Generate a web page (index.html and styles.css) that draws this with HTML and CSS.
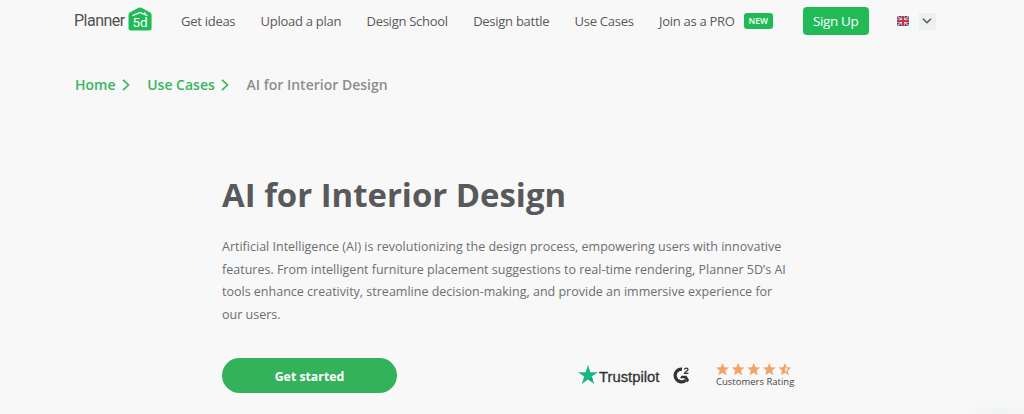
FILE: index.html
```
<!DOCTYPE html>
<html lang="en">
<head>
    <meta charset="UTF-8">
    <title>AI for Interior Design</title>
    <link rel="stylesheet" href="styles.css">
</head>
<body>
    <header class="header">
        <a class="logo" href="#">
            <span class="logo-name">Planner</span>
            <span class="logo-house">
                <svg width="24" height="24" viewBox="0 0 24 24">
                    <path d="M2.200 5.200 10.600.8q1.400-.7 2.800 0l8.400 4.400Q23.600 6.200 23.600 8v13q0 2.500-2.500 2.500H3Q.5 23.500.5 21V8q0-1.800 1.700-2.800z" fill="#20bb57"/>
                    <path d="M4.500 8.700 12 5.400l7.500 3.300M16.800 5.200v2" fill="none" stroke="#fff" stroke-width="1.400"/>
                </svg>
                <span class="logo-mark">5d</span>
            </span>
        </a>
        <nav class="nav">
            <a href="#">Get ideas</a>
            <a href="#">Upload a plan</a>
            <a href="#">Design School</a>
            <a href="#">Design battle</a>
            <a href="#">Use Cases</a>
            <a href="#">Join as a PRO</a>
        </nav>
        <span class="badge">NEW</span>
        <a class="sign-up" href="#">Sign Up</a>
        <svg class="flag" width="12" height="10" viewBox="0 0 12 10">
            <path d="M0 0h12v10H0z" fill="#34406f"/>
            <path d="M0 0l12 10M12 0L0 10" stroke="#f4dfe2" stroke-width="1.600"/>
            <path d="M0 0l12 10M12 0L0 10" stroke="#c5444f" stroke-width=".7"/>
            <path d="M6 0v10M0 5h12" stroke="#fff" stroke-width="3"/>
            <path d="M6 0v10M0 5h12" stroke="#d32f3f" stroke-width="2"/>
        </svg>
        <span class="lang">
            <svg width="10" height="6" viewBox="0 0 10 6"><path d="M1 .8l4 4 4-4" fill="none" stroke="#555" stroke-width="1.500"/></svg>
        </span>
    </header>

    <div class="breadcrumbs">
        <a href="#">Home</a>
        <svg width="8" height="12" viewBox="0 0 8 12"><path d="M1 .8L6.500 6 1 11.200" fill="none" stroke="#37b55f" stroke-width="1.700"/></svg>
        <a href="#">Use Cases</a>
        <svg width="8" height="12" viewBox="0 0 8 12"><path d="M1 .8L6.500 6 1 11.200" fill="none" stroke="#37b55f" stroke-width="1.700"/></svg>
        <span>AI for Interior Design</span>
    </div>

    <main class="hero">
        <h1>AI for Interior Design</h1>
        <p>Artificial Intelligence (AI) is revolutionizing the design process, empowering users with innovative<br>
        features. From intelligent furniture placement suggestions to real-time rendering, Planner 5D’s AI<br>
        tools enhance creativity, streamline decision-making, and provide an immersive experience for<br>
        our users.</p>
        <div class="actions">
            <a class="get-started" href="#">Get started</a>
            <div class="trustpilot">
                <svg width="20" height="19" viewBox="0 0 20 19">
                    <path d="M10 0l2.400 7.200H20l-6.200 4.400L16.200 19 10 14.400 3.800 19l2.400-7.400L0 7.200h7.600z" fill="#16b97f"/>
                    <path d="M14.300 13.200l.6 1.600L10 14.400z" fill="#109468"/>
                </svg>
                <span>Trustpilot</span>
            </div>
            <svg class="g2" width="17" height="17" viewBox="0 0 17 17">
                <path d="M9 2.100A6.400 6.400 0 1 0 12.800 13.300" fill="none" stroke="#333" stroke-width="3.200"/>
                <path d="M8.400 8.700h5l2.700 4.200-1.900 2.700-2.500-4.300H7z" fill="#333"/>
                <path d="M11.300 2.400q.5-1.300 2-1.300 1.700 0 1.700 1.400 0 .9-1.500 1.700T11.600 6.400h3.800" fill="none" stroke="#333" stroke-width="1.300"/>
            </svg>
            <div class="rating">
                <svg width="76" height="13" viewBox="0 0 76 13">
                    <defs>
                        <path id="star" d="M6.500 0l1.800 4.200 4.600.3-3.500 3 1.100 4.800-4-2.500-4 2.500 1.100-4.800-3.500-3 4.600-.3z"/>
                    </defs>
                    <g fill="#f0a468">
                        <use href="#star"/>
                        <use href="#star" x="15.600"/>
                        <use href="#star" x="31.200"/>
                        <use href="#star" x="46.800"/>
                        <use href="#star" x="62.400"/>
                    </g>
                    <path d="M69.200 3.500l.8 1.800 2 .2-1.500 1.500.4 2.200-1.700-1.100z" fill="#f8f8f8"/>
                </svg>
                <span>Customers Rating</span>
            </div>
        </div>
    </main>
    <div class="glow"></div>
</body>
</html>
```
FILE: styles.css
```
body {
    margin: 0;
    height: 414px;
    position: relative;
    background-color: #f8f8f8;
    color: #58595b;
    font-family: "Open Sans", sans-serif;
}
a {
    color: inherit;
    text-decoration: none;
}
svg {
    display: block;
    flex: none;
}
.header {
    display: flex;
    align-items: center;
    height: 42px;
    padding-left: 74px;
    white-space: nowrap;
}
.logo {
    display: flex;
    align-items: center;
    width: 107px;
    color: #505153;
}
.logo-name {
    width: 54px;
    font-family: Roboto, sans-serif;
    font-size: 16px;
    line-height: 20px;
    letter-spacing: -0.5px;
}
.logo-house {
    position: relative;
    margin-top: -5px;
}
.logo-mark {
    position: absolute;
    left: 4.5px;
    top: 6px;
    color: #fff;
    font-family: Roboto, sans-serif;
    font-size: 13.5px;
    line-height: 18px;
}
.nav {
    display: flex;
    gap: 25.3px;
    font-size: 13px;
    letter-spacing: -0.27px;
}
.badge {
    margin-left: 9px;
    width: 29px;
    height: 16px;
    border-radius: 3px;
    background-color: #20bb57;
    color: #fff;
    font-size: 8.5px;
    font-weight: 600;
    line-height: 16px;
    text-align: center;
}
.sign-up {
    margin-left: 30px;
    width: 66px;
    height: 28px;
    border-radius: 4px;
    background-color: #20bb57;
    color: #fff;
    font-size: 13.5px;
    letter-spacing: -0.4px;
    line-height: 28px;
    text-align: center;
}
.flag {
    margin-left: 28px;
}
.lang {
    display: flex;
    align-items: center;
    justify-content: center;
    margin-left: 10px;
    width: 17px;
    height: 17px;
    background-color: #edf0f0;
}
.breadcrumbs {
    display: flex;
    align-items: center;
    margin-top: 32px;
    padding-left: 75px;
    height: 20px;
    color: #8d8d8d;
    font-size: 14px;
    font-weight: 600;
}
.breadcrumbs a {
    color: #37b55f;
}
.breadcrumbs svg {
    margin: 2px 17px 0 6.7px;
}
.hero {
    margin: 78px 0 0 222px;
    width: 580px;
}
h1 {
    margin: 0;
    font-size: 32.9px;
    font-weight: 700;
    line-height: 46px;
}
p {
    margin: 18px 0 0;
    color: #6d6e70;
    font-size: 12.5px;
    line-height: 22.7px;
    white-space: nowrap;
}
.actions {
    display: flex;
    align-items: center;
    margin-top: 31px;
    height: 35px;
}
.get-started {
    width: 175px;
    height: 35px;
    border-radius: 18px;
    background-color: #34b25b;
    color: #fff;
    font-size: 12.3px;
    font-weight: 700;
    line-height: 37px;
    text-align: center;
}
.trustpilot {
    display: flex;
    align-items: center;
    gap: 1px;
    margin-left: 181px;
    width: 95px;
    color: #333;
    font-family: "Liberation Sans", sans-serif;
    font-size: 14.8px;
}
.trustpilot svg {
    margin-top: -2px;
}
.trustpilot span {
    margin-top: 4px;
    -webkit-text-stroke: 0.3px #333;
}
.rating {
    margin-left: 26px;
    color: #444;
    font-size: 9.5px;
    line-height: 12px;
    white-space: nowrap;
}
.glow {
    position: absolute;
    right: 0;
    bottom: 0;
    width: 58px;
    height: 18px;
    background: radial-gradient(40px 28px at 34px 28px, #eef1f2, #f8f8f8);
}
```
